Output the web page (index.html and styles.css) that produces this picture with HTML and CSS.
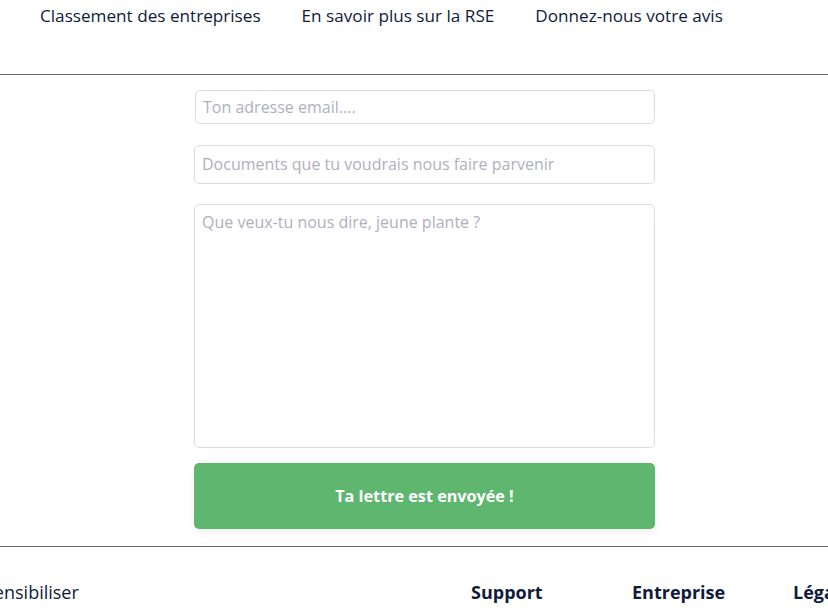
FILE: index.html
```html
<!DOCTYPE html>
<html lang="fr">
<head>
<meta charset="utf-8">
<title>Donnez-nous votre avis</title>
<link rel="stylesheet" href="styles.css">
</head>
<body>
<header class="topbar">
  <nav class="nav">
    <a class="nav-link" href="#">Classement des entreprises</a>
    <a class="nav-link" href="#">En savoir plus sur la RSE</a>
    <a class="nav-link" href="#">Donnez-nous votre avis</a>
  </nav>
</header>
<hr class="rule">
<main class="main">
  <form class="form">
    <input class="field field-email" type="email" placeholder="Ton adresse email....">
    <input class="field field-docs" type="text" placeholder="Documents que tu voudrais nous faire parvenir">
    <textarea class="field field-msg" placeholder="Que veux-tu nous dire, jeune plante ?"></textarea>
    <button class="submit" type="button">Ta lettre est envoyée !</button>
  </form>
</main>
<hr class="rule">
<footer class="footer">
  <div class="foot-col foot-lead">Sensibiliser</div>
  <div class="foot-col foot-title">Support</div>
  <div class="foot-col foot-title">Entreprise</div>
  <div class="foot-col foot-title">Légal</div>
</footer>
</body>
</html>
```
FILE: styles.css
```css
html, body {
  margin: 0;
  padding: 0;
  background: #ffffff;
  overflow: hidden;
}
body {
  font-family: "Open Sans", "Noto Sans", sans-serif;
  color: #0f1a3c;
  width: 828px;
  height: 615px;
}
.topbar {
  height: 74px;
}
.nav {
  display: flex;
  gap: 41px;
  padding-left: 40px;
  padding-top: 4px;
}
.nav-link {
  font-size: 17.15px;
  line-height: 24px;
  color: #0f1a3c;
  text-decoration: none;
}
.rule {
  margin: 0;
  border: 0;
  height: 1px;
  background: #6a6a6a;
}
.main {
  padding-top: 15px;
  padding-bottom: 17px;
}
.form {
  display: flex;
  flex-direction: column;
  width: 461px;
  margin-left: 194px;
}
.field {
  box-sizing: border-box;
  width: 100%;
  border: 1px solid #dcdbe5;
  border-radius: 5px;
  background: #fff;
  font-family: "Open Sans", "Noto Sans", sans-serif;
  font-size: 16px;
  color: #333;
  padding: 0 7px;
  outline: none;
}
.field::placeholder {
  color: #b0afbd;
}
.field-email {
  height: 34px;
  width: 460px;
  margin-left: 1px;
}
.field-docs {
  height: 39px;
  margin-top: 21px;
  padding-bottom: 1px;
}
.field-msg {
  height: 244px;
  margin-top: 20px;
  padding-top: 6px;
  resize: none;
  line-height: 22px;
}
.submit {
  margin-top: 15px;
  height: 66px;
  border: 0;
  border-radius: 5px;
  background: #5eb66f;
  color: #ffffff;
  font-family: "Open Sans", "Noto Sans", sans-serif;
  font-weight: 700;
  font-size: 16.2px;
  box-shadow: 0 4px 8px rgba(0, 0, 0, 0.06);
}
.footer {
  display: grid;
  grid-template-columns: 487px 161px 161px 161px;
  margin-left: -16px;
  padding-top: 33px;
}
.foot-col {
  font-size: 18px;
  line-height: 24px;
  white-space: nowrap;
}
.foot-title {
  font-weight: 700;
}
```
